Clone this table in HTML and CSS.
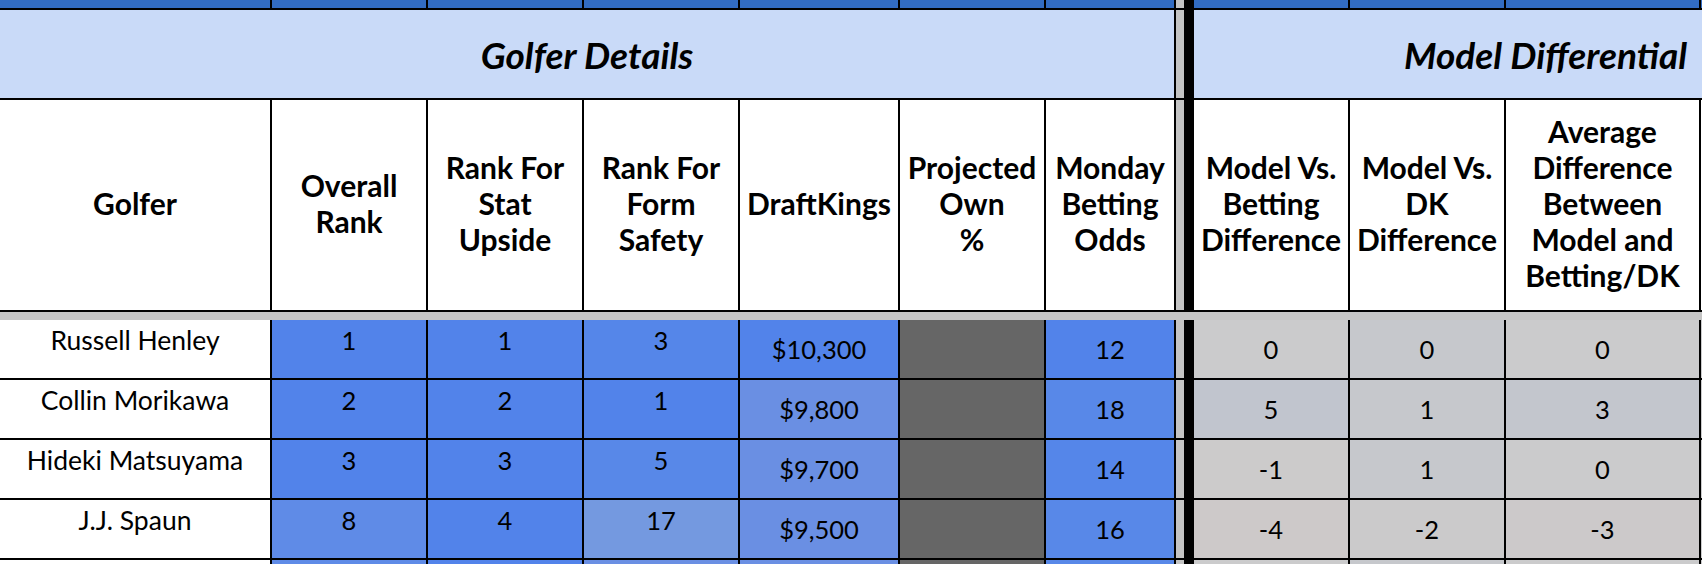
FILE: index.html
```html
<!DOCTYPE html>
<html>
<head>
<meta charset="utf-8">
<link rel="stylesheet" href="styles.css">
</head>
<body>
<div class="sheet">
  <div class="row strip">
    <div class="sc"></div><div class="sc"></div><div class="sc"></div><div class="sc"></div><div class="sc"></div><div class="sc"></div><div class="sc"></div>
    <div class="frz"></div><div class="blk"></div>
    <div class="sc"></div><div class="sc"></div><div class="sc"></div><div class="sc"></div>
  </div>
  <div class="row band">
    <div class="cell title left-span">Golfer Details</div>
    <div class="frz"></div><div class="blk"></div>
    <div class="cell title right-span">Model Differential</div>
  </div>
  <div class="row head">
    <div class="cell hc">Golfer</div>
    <div class="cell hc">Overall<br>Rank</div>
    <div class="cell hc">Rank For<br>Stat<br>Upside</div>
    <div class="cell hc">Rank For<br>Form<br>Safety</div>
    <div class="cell hc">DraftKings</div>
    <div class="cell hc">Projected<br>Own<br>%</div>
    <div class="cell hc">Monday<br>Betting<br>Odds</div>
    <div class="frz"></div><div class="blk"></div>
    <div class="cell hc">Model Vs.<br>Betting<br>Difference</div>
    <div class="cell hc">Model Vs.<br>DK<br>Difference</div>
    <div class="cell hc">Average<br>Difference<br>Between<br>Model and<br>Betting/DK</div>
    <div class="cell hc"></div>
  </div>
  <div class="hbar"></div>

  <div class="row data">
    <div class="cell dc top name wh">Russell Henley</div>
    <div class="cell dc top bA">1</div>
    <div class="cell dc top bA">1</div>
    <div class="cell dc top bA2">3</div>
    <div class="cell dc bA">$10,300</div>
    <div class="cell dc pg"></div>
    <div class="cell dc bA">12</div>
    <div class="frz"></div><div class="blk"></div>
    <div class="cell dc g1">0</div>
    <div class="cell dc g2">0</div>
    <div class="cell dc g1">0</div>
    <div class="cell dc g1"></div>
  </div>
  <div class="row data">
    <div class="cell dc top name wh">Collin Morikawa</div>
    <div class="cell dc top bA">2</div>
    <div class="cell dc top bA">2</div>
    <div class="cell dc top bA">1</div>
    <div class="cell dc bD">$9,800</div>
    <div class="cell dc pg"></div>
    <div class="cell dc bB">18</div>
    <div class="frz"></div><div class="blk"></div>
    <div class="cell dc g3">5</div>
    <div class="cell dc g2">1</div>
    <div class="cell dc g4">3</div>
    <div class="cell dc g1"></div>
  </div>
  <div class="row data">
    <div class="cell dc top name wh">Hideki Matsuyama</div>
    <div class="cell dc top bA">3</div>
    <div class="cell dc top bA">3</div>
    <div class="cell dc top bB">5</div>
    <div class="cell dc bD">$9,700</div>
    <div class="cell dc pg"></div>
    <div class="cell dc bA2">14</div>
    <div class="frz"></div><div class="blk"></div>
    <div class="cell dc g5">-1</div>
    <div class="cell dc g2">1</div>
    <div class="cell dc g1">0</div>
    <div class="cell dc g1"></div>
  </div>
  <div class="row data">
    <div class="cell dc top name wh">J.J. Spaun</div>
    <div class="cell dc top bC">8</div>
    <div class="cell dc top bA">4</div>
    <div class="cell dc top bE">17</div>
    <div class="cell dc bD">$9,500</div>
    <div class="cell dc pg"></div>
    <div class="cell dc bB">16</div>
    <div class="frz"></div><div class="blk"></div>
    <div class="cell dc g6">-4</div>
    <div class="cell dc g7">-2</div>
    <div class="cell dc g8">-3</div>
    <div class="cell dc g1"></div>
  </div>
  <div class="row data">
    <div class="cell dc top wh"></div>
    <div class="cell dc top bC"></div>
    <div class="cell dc top bA"></div>
    <div class="cell dc top bD"></div>
    <div class="cell dc bD"></div>
    <div class="cell dc pg"></div>
    <div class="cell dc bB"></div>
    <div class="frz"></div><div class="blk"></div>
    <div class="cell dc g1"></div>
    <div class="cell dc g2"></div>
    <div class="cell dc g1"></div>
    <div class="cell dc g1"></div>
  </div>
</div>
</body>
</html>
```
FILE: styles.css
```css
html, body {
  margin: 0;
  padding: 0;
  background: #ffffff;
  overflow: hidden;
}
body {
  width: 1702px;
  height: 564px;
  font-family: Lato, "Liberation Sans", sans-serif;
  color: #000;
}
.sheet {
  display: flex;
  flex-direction: column;
  width: 1910px;
}
.row {
  display: grid;
  grid-template-columns: 270px 154px 154px 154px 158px 144px 128px 8px 6px 154px 154px 193px 196px;
  column-gap: 2px;
  background: #000;
  padding-bottom: 2px;
}
.strip { height: 8px; }
.band { height: 88px; }
.head { height: 210px; }
.data { height: 58px; }

.sc { background: #326cc2; }
.frz { background: #c4c4c4; }
.blk { background: #000; }

.hbar {
  height: 8px;
  background: #c4c4c4;
}

.cell {
  display: flex;
  align-items: center;
  justify-content: center;
  text-align: center;
  overflow: hidden;
  white-space: nowrap;
}

.title {
  background: #c9daf8;
  font-size: 37px;
  font-weight: 700;
  font-style: italic;
}
.left-span { grid-column: 1 / 8; }
.right-span { grid-column: 10 / 14; }

.hc {
  background: #ffffff;
  font-size: 30px;
  font-weight: 700;
  line-height: 36px;
  padding-bottom: 5px;
}

.dc {
  font-size: 25.5px;
  line-height: 30px;
}
.name {
  font-size: 26.5px;
}
.top {
  align-items: flex-start;
  padding-top: 5px;
}

.wh { background: #ffffff; }
.bA { background: #5283ea; }
.bA2 { background: #5586e9; }
.bB { background: #5888e8; }
.bC { background: #5f8be7; }
.bD { background: #6a8fe3; }
.bE { background: #7499e0; }
.pg { background: #666666; }

.g1 { background: #cbcbcc; }
.g2 { background: #c6c8cc; }
.g3 { background: #c1c5ce; }
.g4 { background: #c3c6cd; }
.g5 { background: #cccbcb; }
.g6 { background: #cdc9c9; }
.g7 { background: #cbcacb; }
.g8 { background: #ccc9ca; }
```
